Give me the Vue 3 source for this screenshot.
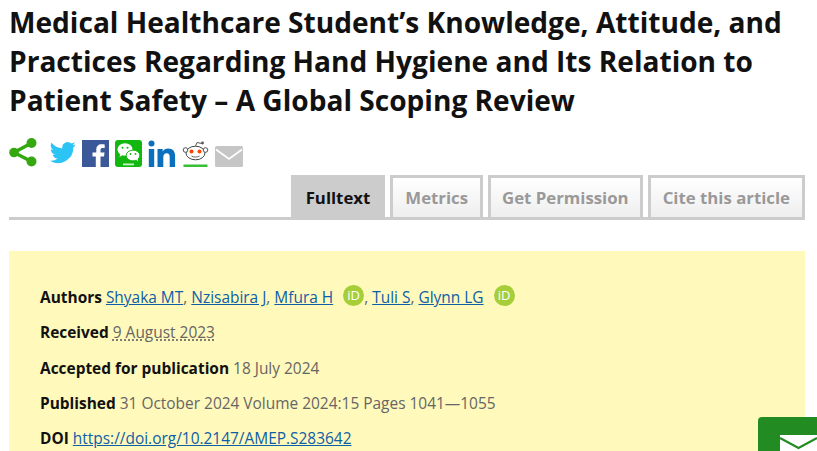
<template>
  <div class="page">
    <h1 class="title">Medical Healthcare Student’s Knowledge, Attitude, and Practices Regarding Hand Hygiene and Its Relation to Patient Safety – A Global Scoping Review</h1>

    <div class="share">
      <svg class="ic first" width="28" height="29" viewBox="0 0 28 29">
        <path d="M5 14.500 L22.500 5 M5 14.500 L22.500 23.500" stroke="#35a80f" stroke-width="3.600" fill="none" />
        <circle cx="5" cy="14.500" r="4.800" fill="#35a80f" />
        <circle cx="22.500" cy="5" r="5" fill="#35a80f" />
        <circle cx="22.500" cy="23.500" r="5" fill="#35a80f" />
      </svg>
      <svg class="ic tw" width="26" height="23" viewBox="0 0 24 21.200">
        <path fill="#2cc3f5" d="M23.500 3.100c-.9.4-1.800.6-2.800.8 1-.6 1.800-1.600 2.100-2.700-.9.6-2 1-3.100 1.200A4.900 4.900 0 0 0 11.400 6.800C7.400 6.600 3.800 4.700 1.400 1.700c-1.300 2.200-.7 5.100 1.500 6.600-.8 0-1.600-.2-2.200-.6 0 2.400 1.700 4.400 3.900 4.900-.7.200-1.500.2-2.200.1.600 2 2.400 3.400 4.600 3.400A9.900 9.900 0 0 1 0 18.100 14 14 0 0 0 21.500 5.700c1-.7 1.800-1.600 2-2.600z" />
      </svg>
      <svg class="ic" width="27" height="27" viewBox="0 0 27 27">
        <rect width="27" height="27" fill="#3b5998" />
        <path fill="#fff" d="M18.500 27V16.500h3.500l.5-4h-4V10c0-1.200.4-2 2-2h2.200V4.400c-.4 0-1.700-.2-3.200-.2-3.100 0-5.200 1.900-5.200 5.400v2.900H10.500v4h3.300V27z" />
      </svg>
      <svg class="ic" width="27" height="27" viewBox="0 0 27 27">
        <rect width="27" height="27" rx="3" fill="#12b70f" />
        <ellipse cx="10" cy="9.500" rx="7.500" ry="6.200" fill="#fff" />
        <path fill="#fff" d="M5.500 13l-1 4 4-2.500z" />
        <ellipse cx="18" cy="15.500" rx="6.800" ry="5.400" fill="#fff" stroke="#12b70f" />
        <path fill="#fff" d="M21 19.500l2 2-.5-3.500z" />
        <circle cx="7.500" cy="7.800" r="1" fill="#12b70f" />
        <circle cx="12.500" cy="7.800" r="1" fill="#12b70f" />
        <circle cx="15.500" cy="14" r=".9" fill="#12b70f" />
        <circle cx="20.500" cy="14" r=".9" fill="#12b70f" />
        <rect x="8" y="23.500" width="11" height="1.800" fill="#c9f2c8" />
      </svg>
      <svg class="ic" width="28" height="27" viewBox="0 0 28 27">
        <circle cx="3.500" cy="3.500" r="3" fill="#0a70be" />
        <rect x=".8" y="9" width="5.400" height="18" fill="#0a70be" />
        <path fill="#0a70be" d="M9.500 9h5.200v2.600c1-1.900 3-3 5.400-3 4.900 0 7 3 7 7.700V27h-5.400V17.300c0-2.500-.8-4-2.900-4-2.200 0-3.500 1.500-3.500 4V27H9.500z" />
      </svg>
      <svg class="ic" width="27" height="26" viewBox="0 0 27 26">
        <ellipse cx="13.500" cy="12" rx="9.500" ry="6.800" fill="#fff" stroke="#444" stroke-width="1" />
        <circle cx="3.500" cy="9" r="2.300" fill="#fff" stroke="#444" stroke-width=".9" />
        <circle cx="23.500" cy="9" r="2.300" fill="#fff" stroke="#444" stroke-width=".9" />
        <circle cx="9.500" cy="10.500" r="2" fill="#ff4500" />
        <circle cx="17.500" cy="10.500" r="2" fill="#ff4500" />
        <path d="M9.500 15c2 1.400 6 1.400 8 0" stroke="#666" fill="none" />
        <path d="M13.500 5l1.500-3.500 4.500 1" stroke="#555" fill="none" />
        <circle cx="20.500" cy="2" r="1.400" fill="#555" />
        <rect x="1.500" y="23.500" width="24" height="2.500" fill="#35c035" />
      </svg>
      <svg class="ic" width="28" height="21" viewBox="0 0 28 21">
        <rect width="28" height="21" rx="1.500" fill="#c6c6c6" />
        <path d="M1 3.500 L14 13 L27 3.500" stroke="#fff" stroke-width="1.800" fill="none" />
      </svg>
    </div>

    <div class="tabs">
      <a class="tab active">Fulltext</a>
      <a class="tab">Metrics</a>
      <a class="tab perm">Get Permission</a>
      <a class="tab">Cite this article</a>
    </div>

    <div class="meta">
      <p>
        <b>Authors</b> <a>Shyaka MT</a>, <a>Nzisabira J</a>, <a>Mfura H</a>
        <span class="orcid">iD</span>, <a>Tuli S</a>, <a>Glynn LG</a>
        <span class="orcid">iD</span>
      </p>
      <p><b>Received</b> <span class="dotted">9 August 2023</span></p>
      <p><b>Accepted for publication</b> 18 July 2024</p>
      <p><b>Published</b> 31 October 2024 Volume 2024:15 Pages 1041—1055</p>
      <p><b>DOI</b> <a>https://doi.org/10.2147/AMEP.S283642</a></p>
    </div>

    <div class="float">
      <svg width="37" height="16" viewBox="0 0 37 16">
        <rect width="37" height="16" fill="#fff" />
        <path d="M0 3 L18.500 13 L37 3" fill="none" stroke="#228b22" stroke-width="2" />
      </svg>
    </div>
  </div>
</template>

<script setup>
</script>

<style>
html, body {
  margin: 0;
  background: #fff;
  overflow: hidden;
}
</style>

<style scoped>
.page {
  position: relative;
  height: 451px;
  width: 817px;
  overflow: hidden;
  box-sizing: border-box;
  padding: 0 12px 0 9px;
  font-family: "Open Sans", sans-serif;
  color: #666;
}
.title {
  margin: 3px 0 0;
  font-size: 28.100px;
  line-height: 39px;
  font-weight: 700;
  color: #111;
}
.share {
  display: flex;
  align-items: flex-end;
  gap: 6px;
  height: 29px;
  margin-top: 18px;
}
.ic {
  flex: none;
  display: block;
}
.first {
  margin-right: 7px;
}
.tw {
  margin-bottom: 3px;
}
.tabs {
  display: flex;
  justify-content: flex-end;
  gap: 5px;
  border-bottom: 3px solid #ccc;
  margin-top: 8px;
}
.tab {
  display: block;
  font-size: 16.800px;
  font-weight: 700;
  line-height: 39px;
  padding: 0 12px;
  border: 3px solid #ccc;
  border-bottom: 0;
  color: #999;
  background: linear-gradient(#fff, #eee);
}
.tab.perm {
  padding: 0 11px;
}
.tab.active {
  color: #111;
  background: #ccc;
}
.meta {
  margin-top: 31px;
  background: #fff9bb;
  padding: 37px 31px 0;
  height: 200px;
}
.meta p {
  margin: 0 0 17.250px;
  font-size: 15.450px;
  line-height: 18px;
  height: 18px;
  white-space: nowrap;
}
.meta b {
  color: #111;
}
.meta a {
  color: #0d5ea8;
  text-decoration: underline;
}
.dotted {
  text-decoration: underline dotted #555;
  text-underline-offset: 1px;
}
.orcid {
  display: inline-block;
  width: 21px;
  height: 21px;
  line-height: 21px;
  margin: -6px 0 -6px 10px;
  border-radius: 50%;
  background: #a6ce39;
  color: #fff;
  font-size: 13px;
  text-align: center;
  vertical-align: 3px;
}
.float {
  position: absolute;
  right: 0;
  bottom: 0;
  width: 59px;
  height: 34px;
  background: #228b22;
  border-top-left-radius: 4px;
  display: flex;
  justify-content: flex-end;
  align-items: flex-end;
}
.float svg {
  display: block;
}
</style>
